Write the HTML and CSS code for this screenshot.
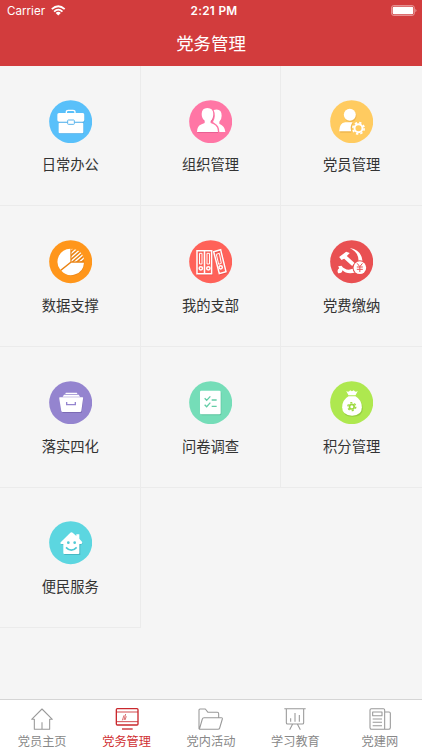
FILE: index.html
```html
<!DOCTYPE html>
<html lang="zh-CN">
<head>
<meta charset="utf-8">
<title>党务管理</title>
<link rel="stylesheet" href="styles.css">
</head>
<body>
<div class="app">
  <header class="header">
    <div class="status">
      <div class="carrier"><span>Carrier</span>
        <svg class="wifi" viewBox="0 0 45 33"><g fill="none" stroke="#fff" stroke-width="5.5"><path d="M2.500 12.500Q22.500 -6 42.500 12.500"/><path d="M9.500 20Q22.500 8 35.500 20"/></g><path d="M14.500 24Q22.500 17 30.500 24L22.500 32Z" fill="#fff"/></svg>
      </div>
      <div class="time">2:21 PM</div>
      <svg class="battery" viewBox="0 0 80 33"><rect x="1.500" y="1.500" width="69" height="30" rx="7" fill="none" stroke="#fff" stroke-opacity=".55" stroke-width="2.500"/><rect x="5" y="5" width="62" height="23" rx="4" fill="#fff"/><path d="M74 11Q79 16.500 74 22Z" fill="#fff" fill-opacity=".6"/></svg>
    </div>
    <h1 class="title">党务管理</h1>
  </header>
  <main class="grid">
    <div class="cell">
      <svg class="icon" viewBox="56 28 130 130"><circle cx="121" cy="93" r="64.500" fill="#59c0fa"/><g fill="#2c91d4" opacity=".45" transform="translate(1 2)"><rect x="81" y="67" width="81" height="26" rx="5"/><rect x="85" y="91" width="74" height="37" rx="4"/></g><path d="M108 68V64Q108 59 114 59H128Q134 59 134 64V68" fill="none" stroke="#fff" stroke-width="4"/><rect x="81" y="67" width="81" height="26" rx="5" fill="#fff"/><rect x="85" y="96" width="74" height="32" rx="3" fill="#fff"/><rect x="112" y="88" width="20" height="13" rx="2" fill="#fff" stroke="#59b5ec" stroke-width="3"/></svg>
      <span class="label">日常办公</span>
    </div>
    <div class="cell">
      <svg class="icon" viewBox="58 28 130 130"><circle cx="123" cy="93" r="64.500" fill="#ff76a5"/><g fill="#c64078" opacity=".4" transform="translate(1 3)"><path d="M82 124Q82 106 96 101L105 97V90Q96 84 96 70Q96 52 113 52Q131 52 131 70Q131 84 123 91V97L132 101Q145 107 145 124Z"/></g><path d="M132 58Q156 52 156 75Q156 87 149 93V99Q166 106 167 124H149Q149 105 135 98L130 94Q140 76 132 58Z" fill="#fff"/><path d="M82 124Q82 106 96 101L105 97V90Q96 84 96 70Q96 52 113 52Q131 52 131 70Q131 84 123 91V97L132 101Q145 107 145 124Z" fill="#fff"/></svg>
      <span class="label">组织管理</span>
    </div>
    <div class="cell">
      <svg class="icon" viewBox="59.5 28 130 130"><circle cx="124.500" cy="93" r="64.500" fill="#ffcb60"/><g fill="#d99a37" opacity=".4" transform="translate(2 3)"><circle cx="119" cy="73" r="18"/><path d="M88 123Q89 96 105 95H126L121 123Z"/></g><g fill="#fff"><circle cx="119" cy="72" r="18"/><path d="M87 122Q88 96 105 95H127Q119 107 123 122Z"/></g><circle cx="145" cy="113" r="20" fill="#ffcb60"/><circle cx="145" cy="113" r="12" fill="none" stroke="#fff" stroke-width="6"/><circle cx="145" cy="113" r="17" fill="none" stroke="#fff" stroke-width="5" stroke-dasharray="7 6.350"/></svg>
      <span class="label">党员管理</span>
    </div>
    <div class="cell">
      <svg class="icon" viewBox="56 29 130 130"><defs><clipPath id="wedge"><path d="M123 55A39 39 0 0 1 162 92L123 94Z"/></clipPath></defs><circle cx="121" cy="94" r="64.500" fill="#ff961b"/><circle cx="124" cy="98" r="38" fill="#b95e0b" opacity=".3"/><path d="M120 55V94L90 118A39 39 0 0 1 120 55Z" fill="#fff"/><path d="M123 97H161A39 39 0 0 1 93 121Z" fill="#fff"/><g clip-path="url(#wedge)" stroke="#fff" stroke-width="4"><path d="M112 67L134 47M112 79L150 45M115 88L158 50M120 95L168 53M132 96L174 59M146 96L176 70"/></g></svg>
      <span class="label">数据支撑</span>
    </div>
    <div class="cell">
      <svg class="icon" viewBox="478 29 130 130"><circle cx="543" cy="94" r="64.500" fill="#ff6259"/><g fill="none" stroke="#b8322d" stroke-width="4" opacity=".35" transform="translate(2 3)"><path d="M502 61H546V130H502ZM552 64L573 58L589 124L569 130Z"/></g><g fill="none" stroke="#fff" stroke-width="4.5"><path d="M502 61H546V130H502ZM524.500 61V130"/><path d="M509.500 69H517V101H509.500ZM532 69H539.500V101H532Z" stroke-width="3"/><circle cx="513.500" cy="114" r="5"/><circle cx="536" cy="114" r="5"/><path d="M552 64L573 58L589 124L569 130Z"/><path d="M560 72L569 69L575 99L567 102Z" stroke-width="3"/><circle cx="573" cy="111" r="5"/></g></svg>
      <span class="label">我的支部</span>
    </div>
    <div class="cell">
      <svg class="icon" viewBox="59.5 29 130 130"><circle cx="124.500" cy="94" r="64.500" fill="#e95052"/><g fill="#fff"><path d="M119 53Q154 59 157 92Q155 126 120 129Q105 129 97 120Q96 130 84 129Q79 119 87 114L84 108L94 106Q102 117 116 118Q143 117 145 90Q145 66 119 53Z"/><path d="M87 80L108 64L119 68L110 77L134 99L126 107L102 85L94 89Z"/></g><circle cx="149" cy="112" r="22" fill="#e95052"/><circle cx="149" cy="112" r="19" fill="#fff"/><path d="M141 99L149 109L157 99M149 109V125M140 110H158M140 117H158" fill="none" stroke="#e95052" stroke-width="3"/></svg>
      <span class="label">党费缴纳</span>
    </div>
    <div class="cell">
      <svg class="icon" viewBox="56 31 130 130"><circle cx="121" cy="96" r="64.500" fill="#9484cf"/><path d="M90 85H159L154 127H97Z" fill="#58468f" opacity=".4"/><g fill="#fff"><rect x="105" y="66" width="36" height="4" rx="2"/><path d="M101 72H145L149 78H97Z"/><path d="M88 80H157Q159 80 158 85L153 121Q152 124 149 124H97Q94 124 93 121L87 85Q86 80 88 80Z"/></g><path d="M109 94V102H135V94" fill="none" stroke="#9484cf" stroke-width="4"/></svg>
      <span class="label">落实四化</span>
    </div>
    <div class="cell">
      <svg class="icon" viewBox="478 31 130 130"><circle cx="543" cy="96" r="64.500" fill="#75ddb8"/><rect x="514" y="63" width="61" height="71" rx="4" fill="#329970" opacity=".35"/><rect x="511" y="60" width="62" height="71" rx="4" fill="#fff"/><path d="M525 83L531 89L542 77M525 102L531 108L542 96M546 88H561M546 107H561" fill="none" stroke="#63cda6" stroke-width="4"/></svg>
      <span class="label">问卷调查</span>
    </div>
    <div class="cell">
      <svg class="icon" viewBox="59.5 31 130 130"><circle cx="124.500" cy="96" r="64.500" fill="#aee84f"/><path d="M116 81H138Q158 91 158 114Q158 137 127 138Q98 137 98 114Q98 91 116 81Z" fill="#71a82b" opacity=".4"/><g fill="#fff"><path d="M108 61Q116 66 120 59Q125 64 131 59Q135 66 143 61L136 74H115Z"/><path d="M115 77H136Q155 88 155 110Q155 135 126 135Q96 135 96 110Q96 88 115 77Z"/></g><circle cx="125" cy="108" r="7" fill="none" stroke="#9dda40" stroke-width="5"/><circle cx="125" cy="108" r="12" fill="none" stroke="#9dda40" stroke-width="4" stroke-dasharray="6.300 6.266"/></svg>
      <span class="label">积分管理</span>
    </div>
    <div class="cell">
      <svg class="icon" viewBox="56 32 130 130"><circle cx="121" cy="97" r="64.500" fill="#5cd6e0"/><path d="M92 102L125 69L158 99L150 105V134H102V105Z" fill="#288d99" opacity=".4"/><path d="M90 98Q91 95 95 92L120 67Q123 64 127 67L138 77V72H147V85L155 94Q158 98 153 101H147V128Q147 131 144 131H102Q99 131 99 128V101H94Q90 101 90 98Z" fill="#fff"/><circle cx="114" cy="97" r="4" fill="#4ecad5"/><circle cx="133" cy="97" r="4" fill="#4ecad5"/><path d="M107 111Q123 128 139 111" fill="none" stroke="#4ecad5" stroke-width="5"/></svg>
      <span class="label">便民服务</span>
    </div>
  </main>
  <nav class="tabs">
    <div class="tab">
      <svg class="tab-icon" viewBox="82 42 90 90"><path d="M96 88L127 57L158 88H150V118H104V88ZM127 97V118" /></svg>
      <span>党员主页</span>
    </div>
    <div class="tab active">
      <svg class="tab-icon" viewBox="335 42 90 90"><rect x="348" y="56" width="65" height="49" rx="3" stroke-width="4"/><path d="M348 66H413M348 95H413" stroke-width="2.500"/><path d="M366 91L371 76M371 90L376 72M374 90L378 79" stroke-width="2"/><path d="M365 117H397" stroke-width="4"/></svg>
      <span>党务管理</span>
    </div>
    <div class="tab">
      <svg class="tab-icon" viewBox="588 42 90 90"><path d="M597 117V60Q597 57 600 57H616L624 67H652Q656 67 656 71V82M598 118L607 87Q608 83 612 83H664Q668 83 667 87L659 114Q658 118 654 118Z"/></svg>
      <span>党内活动</span>
    </div>
    <div class="tab">
      <svg class="tab-icon" viewBox="205 42 90 90"><path d="M218 56H282M224 56V98Q224 102 228 102H272Q276 102 276 98V56M237 85V95M250 69V95M263 75V95M243 102L234 119M257 102L266 119"/></svg>
      <span>学习教育</span>
    </div>
    <div class="tab">
      <svg class="tab-icon" viewBox="460 42 90 90"><path d="M519 118H480Q475 118 475 113V60Q475 56 479 56H515Q519 56 519 60V118H530Q536 118 536 113V70Q536 66 532 66H519M483 66H511V77H483ZM483 87H511M483 97H511M483 107H511"/></svg>
      <span>党建网</span>
    </div>
  </nav>
</div>
</body>
</html>
```
FILE: styles.css
```css
* { box-sizing: border-box; }
body {
  margin: 0;
  background: #f5f5f5;
  color: #333;
  font-family: "Liberation Sans", "Noto Sans CJK SC", sans-serif;
}
.app {
  width: 422px;
  height: 750px;
  display: flex;
  flex-direction: column;
  overflow: hidden;
}
.header {
  height: 65.8px;
  flex: none;
  background: #d23c3d;
  color: #fff;
}
.status {
  height: 22px;
  display: grid;
  grid-template-columns: 1fr auto 1fr;
  align-items: center;
  padding: 0 5px 0 7px;
  font: 11.6px/22px Inter, sans-serif;
}
.carrier { display: flex; align-items: center; gap: 6px; }
.wifi { width: 14.5px; height: 11px; margin-top: -1px; }
.time { font-weight: 600; font-size: 11.8px; letter-spacing: .3px; margin-left: 4px; }
.battery { width: 26.5px; height: 11px; justify-self: end; margin-top: -1px; }
.title {
  margin: 0;
  height: 43px;
  font-size: 17.4px;
  font-weight: 400;
  line-height: 44px;
  text-align: center;
}
.grid {
  flex: 1;
  display: grid;
  grid-template-columns: repeat(3, 1fr);
  grid-auto-rows: 140.6px;
  align-content: start;
}
.cell {
  display: flex;
  flex-direction: column;
  align-items: center;
  padding-top: 33.8px;
  border-right: 1px solid #ebebeb;
  border-bottom: 1px solid #ebebeb;
}
.cell:nth-child(3n) { border-right: 0; }
.cell:nth-child(3n+1) { padding-left: 1px; }
.icon { width: 43.33px; height: 43.33px; flex: none; display: block; }
.label { margin-top: 12.4px; font-size: 14.3px; line-height: 20px; white-space: nowrap; }
.tabs {
  height: 51px;
  flex: none;
  display: grid;
  grid-template-columns: repeat(5, 1fr);
  background: #fff;
  border-top: 1px solid #d5d5d5;
}
.tab {
  display: flex;
  flex-direction: column;
  align-items: center;
  padding-top: 4px;
  color: #888;
  font-size: 12.2px;
  line-height: 16px;
  white-space: nowrap;
}
.tab.active { color: #d03032; }
.tab-icon {
  width: 30px;
  height: 30px;
  flex: none;
  fill: none;
  stroke: #999;
  stroke-width: 3.2;
  stroke-linejoin: round;
}
.active .tab-icon { stroke: #c9282d; }
```
